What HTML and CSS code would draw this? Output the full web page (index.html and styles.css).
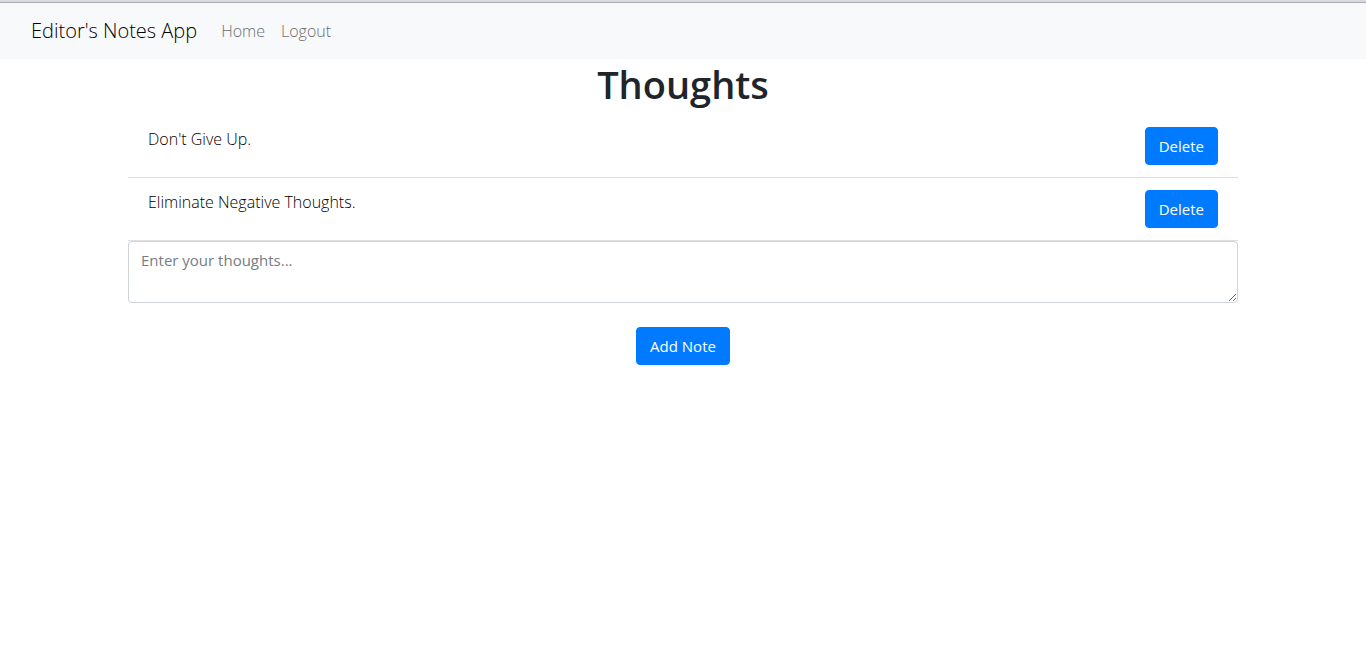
FILE: index.html
```html
<!DOCTYPE html>
<html lang="en">
<head>
<meta charset="utf-8">
<title>Editor's Notes App</title>
<link rel="stylesheet" href="styles.css">
</head>
<body>
<nav class="navbar">
  <a class="brand" href="#">Editor's Notes App</a>
  <a class="nav-link" href="#">Home</a>
  <a class="nav-link" href="#">Logout</a>
</nav>
<main class="container">
  <h1 class="title">Thoughts</h1>
  <ul class="notes">
    <li class="note"><span>Don't Give Up.</span><button class="btn" type="button">Delete</button></li>
    <li class="note"><span>Eliminate Negative Thoughts.</span><button class="btn" type="button">Delete</button></li>
  </ul>
  <form class="note-form">
    <textarea class="input" rows="2" placeholder="Enter your thoughts..." aria-label="Enter your thoughts"></textarea>
    <button class="btn" type="button">Add Note</button>
  </form>
</main>
</body>
</html>
```
FILE: styles.css
```css
* { box-sizing: border-box; }
body {
  margin: 0;
  border-top: 2px solid #dadbe2;
  background: #fff;
  color: #212529;
  font: 300 16px/24px "Open Sans", "Noto Sans", sans-serif;
}
.navbar {
  display: flex;
  align-items: center;
  padding: 8px 31px;
  border-top: 1px solid #a9abb1;
  background: #f8f9fb;
}
.brand {
  margin-right: 16px;
  color: #000;
  font-size: 20px;
  line-height: 30px;
  text-decoration: none;
}
.nav-link {
  padding: 8px;
  color: #6c6d6d;
  text-decoration: none;
}
.container {
  max-width: 1140px;
  margin: 0 auto;
  padding: 0 15px;
}
.title {
  margin: 0 0 6px;
  font-size: 38px;
  font-weight: 600;
  line-height: 50px;
  text-align: center;
}
.notes {
  margin: 0;
  padding: 0;
  list-style: none;
}
.note {
  display: flex;
  align-items: flex-start;
  justify-content: space-between;
  padding: 12px 20px;
  border-bottom: 1px solid #dfdfdf;
  color: #000;
}
.btn {
  padding: 6px 13px;
  border: 1px solid #007bff;
  border-radius: 4px;
  background: #007bff;
  color: #fff;
  font: inherit;
  font-size: 15px;
  font-weight: 400;
  line-height: 24px;
  cursor: pointer;
}
.note-form {
  display: flex;
  flex-direction: column;
  align-items: center;
  gap: 24px;
}
.input {
  width: 100%;
  padding: 6px 12px;
  border: 1px solid #ced4da;
  border-radius: 4px;
  color: #495057;
  font: inherit;
  font-size: 15px;
  font-weight: 400;
  resize: vertical;
}
.input::placeholder { color: #757d85; }
```
